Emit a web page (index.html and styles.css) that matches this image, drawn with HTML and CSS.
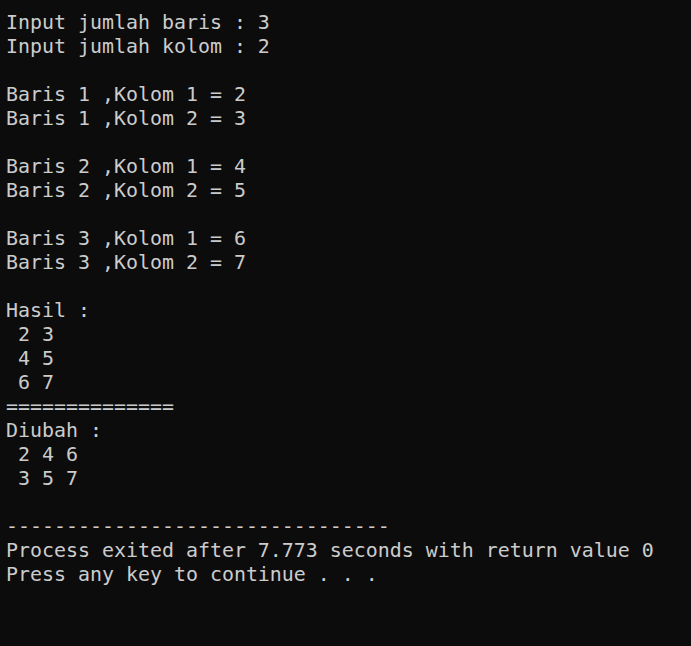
FILE: index.html
```html
<!DOCTYPE html>
<html>
<head>
<meta charset="utf-8">
<link rel="stylesheet" href="styles.css">
</head>
<body>
<pre class="console">Input jumlah baris : 3
Input jumlah kolom : 2

Baris 1 ,Kolom 1 = 2
Baris 1 ,Kolom 2 = 3

Baris 2 ,Kolom 1 = 4
Baris 2 ,Kolom 2 = 5

Baris 3 ,Kolom 1 = 6
Baris 3 ,Kolom 2 = 7

Hasil :
 2 3
 4 5
 6 7
==============
Diubah :
 2 4 6
 3 5 7

--------------------------------
Process exited after 7.773 seconds with return value 0
Press any key to continue . . .</pre>
</body>
</html>
```
FILE: styles.css
```css
html, body {
  margin: 0;
  padding: 0;
  background: #0c0c0c;
  height: 100%;
}
.console {
  margin: 0;
  padding: 11px 6px 0 6px;
  color: #cccccc;
  font-family: "DejaVu Sans Mono", monospace;
  font-size: 19.93px;
  line-height: 24px;
  white-space: pre;
}
```
